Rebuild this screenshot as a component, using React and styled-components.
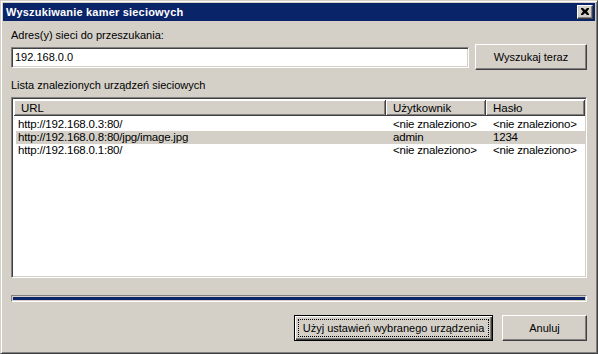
import styled, { createGlobalStyle } from 'styled-components'

const GlobalStyle = createGlobalStyle`
  html, body {
    margin: 0;
    padding: 0;
    background: #d4d0c8;
  }
  * {
    box-sizing: border-box;
  }
`

const font = `"Liberation Sans", Arial, sans-serif`

const Window = styled.div`
  width: 598px;
  height: 354px;
  background: #d4d0c8;
  border: 1px solid;
  border-color: #d4d0c8 #404040 #404040 #d4d0c8;
  box-shadow: inset 1px 1px #ffffff, inset -1px -1px #808080;
  padding: 2px;
  display: flex;
  flex-direction: column;
  font-family: ${font};
  font-size: 11px;
  color: #000;
`

const TitleBar = styled.div`
  height: 18px;
  background: #0a246a;
  display: flex;
  align-items: center;
  justify-content: space-between;
  padding: 0 2px 0 3px;
`

const Title = styled.span`
  color: #fff;
  font-weight: bold;
  font-size: 11px;
  letter-spacing: 0.2px;
`

const CloseButton = styled.div`
  width: 16px;
  height: 14px;
  background: #d4d0c8;
  border: 1px solid;
  border-color: #ffffff #404040 #404040 #ffffff;
  box-shadow: inset -1px -1px #808080;
  display: flex;
  align-items: center;
  justify-content: center;
  padding-bottom: 1px;
`

const Body = styled.div`
  flex: 1;
  display: flex;
  flex-direction: column;
  padding: 8px 8px 0 8px;
`

const Label = styled.div`
  line-height: 13px;
  margin: ${p => p.$margin || '0'};
`

const Row = styled.div`
  display: flex;
  align-items: center;
  justify-content: space-between;
  margin-top: ${p => p.$top || '0'};
`

const Sunken = `
  border: 1px solid;
  border-color: #808080 #ffffff #ffffff #808080;
  box-shadow: inset 1px 1px #404040, inset -1px -1px #d4d0c8;
`

const Input = styled.div`
  ${Sunken}
  width: 458px;
  height: 21px;
  background: #fff;
  display: flex;
  align-items: center;
  padding-left: 3px;
`

const Button = styled.div`
  width: ${p => p.$width};
  height: 26px;
  background: #d4d0c8;
  border: 1px solid;
  border-color: ${p => (p.$default ? '#000' : '#ffffff #404040 #404040 #ffffff')};
  box-shadow: ${p =>
    p.$default
      ? 'inset 1px 1px #ffffff, inset -1px -1px #404040, inset -2px -2px #808080'
      : 'inset -1px -1px #808080'};
  display: flex;
  align-items: center;
  justify-content: center;
  padding: 3px;
`

const Focus = styled.span`
  flex: 1;
  align-self: stretch;
  display: flex;
  align-items: center;
  justify-content: center;
  border: 1px dotted #000;
`

const List = styled.div`
  ${Sunken}
  height: 181px;
  background: #fff;
  padding: 2px;
  display: flex;
  flex-direction: column;
`

const Header = styled.div`
  display: grid;
  grid-template-columns: 372px 100px 99px 1fr;
  height: 16px;
`

const HeaderCell = styled.div`
  background: #d4d0c8;
  border-right: 1px solid #404040;
  border-bottom: 1px solid #404040;
  box-shadow: inset 1px 1px #ffffff, inset -1px -1px #808080;
  padding-left: 7px;
  display: flex;
  align-items: center;
  font-size: 11.5px;
`

const Rows = styled.div`
  padding-top: 2px;
  display: flex;
  flex-direction: column;
`

const ListRow = styled.div`
  display: grid;
  grid-template-columns: 372px 100px 1fr;
  height: 13px;
  margin: 0 0 0 2px;
  width: 570px;
  background: ${p => (p.$selected ? '#d4d0c8' : 'transparent')};
  line-height: 13px;
  font-size: 11.5px;
  letter-spacing: -0.2px;
`

const Cell = styled.div`
  padding-left: ${p => p.$pad || '5px'};
  white-space: nowrap;
`

const Progress = styled.div`
  margin-top: 17px;
  height: 7px;
  border: 1px solid;
  border-color: #808080 #ffffff #ffffff #808080;
  padding: 1px;
`

const ProgressFill = styled.div`
  height: 100%;
  background: #0a246a;
`

const Footer = styled.div`
  display: flex;
  justify-content: flex-end;
  gap: 9px;
  margin-top: 13px;
`

const devices = [
  { url: 'http://192.168.0.3:80/', user: '<nie znaleziono>', pass: '<nie znaleziono>' },
  { url: 'http://192.168.0.8:80/jpg/image.jpg', user: 'admin', pass: '1234', selected: true },
  { url: 'http://192.168.0.1:80/', user: '<nie znaleziono>', pass: '<nie znaleziono>' },
]

export default function App() {
  return (
    <>
      <GlobalStyle />
      <Window>
        <TitleBar>
          <Title>Wyszukiwanie kamer sieciowych</Title>
          <CloseButton>
            <svg width="8" height="7" viewBox="0 0 8 7">
              <path d="M0 0h2l2 2 2-2h2v1L6 3.5 8 6v1H6L4 5 2 7H0V6l2-2.5L0 1z" fill="#000" />
            </svg>
          </CloseButton>
        </TitleBar>
        <Body>
          <Label>Adres(y) sieci do przeszukania:</Label>
          <Row $top="2px">
            <Input>192.168.0.0</Input>
            <Button $width="112px">Wyszukaj teraz</Button>
          </Row>
          <Label $margin="9px 0 5px 0">Lista znalezionych urządzeń sieciowych</Label>
          <List>
            <Header>
              <HeaderCell>URL</HeaderCell>
              <HeaderCell>Użytkownik</HeaderCell>
              <HeaderCell>Hasło</HeaderCell>
              <div />
            </Header>
            <Rows>
              {devices.map(d => (
                <ListRow key={d.url} $selected={d.selected}>
                  <Cell $pad="2px">{d.url}</Cell>
                  <Cell>{d.user}</Cell>
                  <Cell>{d.pass}</Cell>
                </ListRow>
              ))}
            </Rows>
          </List>
          <Progress>
            <ProgressFill />
          </Progress>
          <Footer>
            <Button $width="199px" $default>
              <Focus>Użyj ustawień wybranego urządzenia</Focus>
            </Button>
            <Button $width="85px">Anuluj</Button>
          </Footer>
        </Body>
      </Window>
    </>
  )
}
